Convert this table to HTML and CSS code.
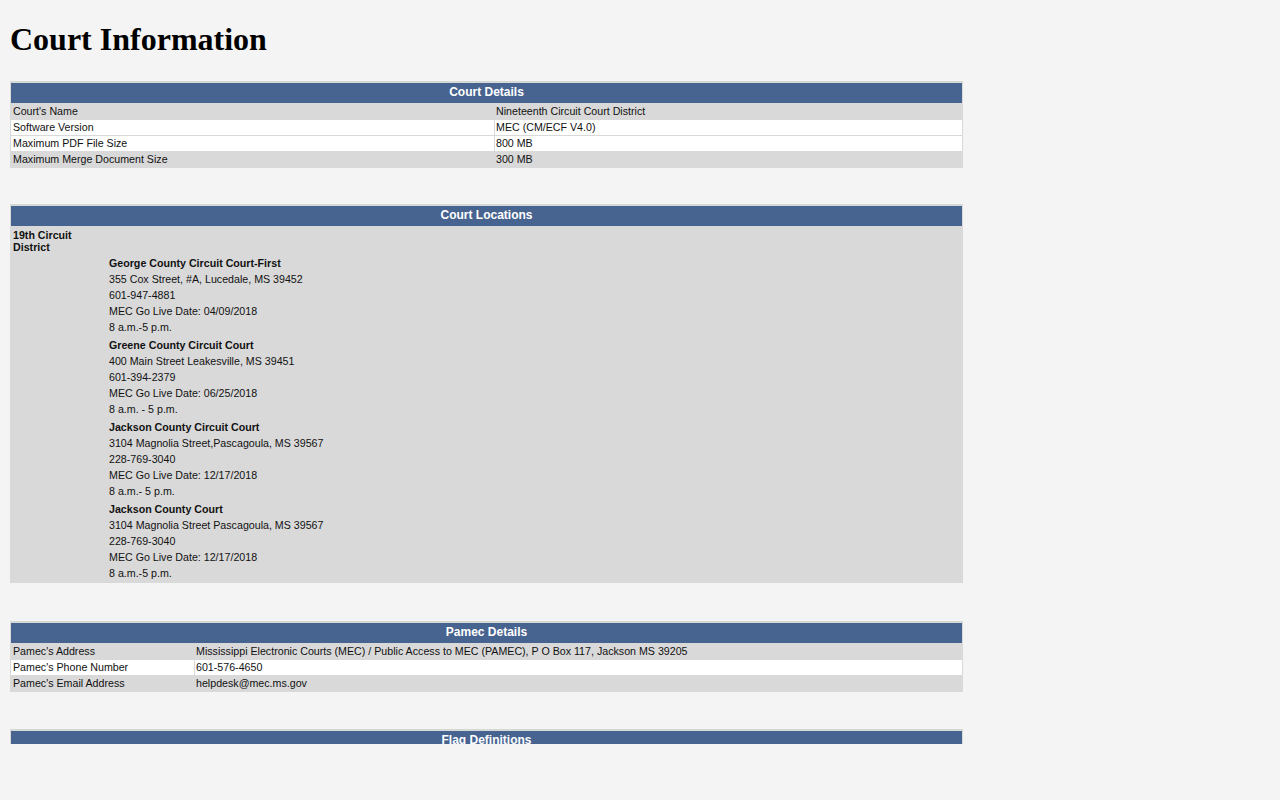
FILE: index.html
```html
<!DOCTYPE html>
<html lang="en">
<head>
<meta charset="utf-8">
<title>Court Information</title>
<link rel="stylesheet" href="styles.css">
</head>
<body>
<div class="page">
  <h1 class="title">Court Information</h1>

  <table class="panel panel-details">
    <tr><th class="panel-head" colspan="2">Court Details</th></tr>
    <tr><td class="label w-details">Court's Name</td><td class="value">Nineteenth Circuit Court District</td></tr>
    <tr class="alt"><td class="label">Software Version</td><td class="value">MEC (CM/ECF V4.0)</td></tr>
    <tr class="alt"><td class="label">Maximum PDF File Size</td><td class="value">800 MB</td></tr>
    <tr><td class="label">Maximum Merge Document Size</td><td class="value">300 MB</td></tr>
  </table>

  <table class="panel panel-locations">
    <tr><th class="panel-head" colspan="2">Court Locations</th></tr>
    <tr><td class="district">19th Circuit District</td><td class="empty"></td></tr>
    <tr>
      <td class="empty"></td>
      <td class="courts">
        <div class="court">
          <div class="court-name">George County Circuit Court-First</div>
          <div>355 Cox Street, #A, Lucedale, MS 39452</div>
          <div>601-947-4881</div>
          <div>MEC Go Live Date: 04/09/2018</div>
          <div>8 a.m.-5 p.m.</div>
        </div>
        <div class="court">
          <div class="court-name">Greene County Circuit Court</div>
          <div>400 Main Street Leakesville, MS 39451</div>
          <div>601-394-2379</div>
          <div>MEC Go Live Date: 06/25/2018</div>
          <div>8 a.m. - 5 p.m.</div>
        </div>
        <div class="court">
          <div class="court-name">Jackson County Circuit Court</div>
          <div>3104 Magnolia Street,Pascagoula, MS 39567</div>
          <div>228-769-3040</div>
          <div>MEC Go Live Date: 12/17/2018</div>
          <div>8 a.m.- 5 p.m.</div>
        </div>
        <div class="court">
          <div class="court-name">Jackson County Court</div>
          <div>3104 Magnolia Street Pascagoula, MS 39567</div>
          <div>228-769-3040</div>
          <div>MEC Go Live Date: 12/17/2018</div>
          <div>8 a.m.-5 p.m.</div>
        </div>
      </td>
    </tr>
  </table>

  <table class="panel">
    <tr><th class="panel-head" colspan="2">Pamec Details</th></tr>
    <tr><td class="label w-pamec">Pamec's Address</td><td class="value">Mississippi Electronic Courts (MEC) / Public Access to MEC (PAMEC), P O Box 117, Jackson MS 39205</td></tr>
    <tr class="alt"><td class="label">Pamec's Phone Number</td><td class="value">601-576-4650</td></tr>
    <tr><td class="label">Pamec's Email Address</td><td class="value">helpdesk@mec.ms.gov</td></tr>
  </table>

  <table class="panel">
    <tr><th class="panel-head" colspan="2">Flag Definitions</th></tr>
  </table>
</div>
</body>
</html>
```

FILE: styles.css
```css
html, body {
  margin: 0;
  padding: 0;
  background: #f4f4f4;
}

.page {
  height: 744px;
  overflow: hidden;
  padding: 0 10px;
  color: #111;
  font-family: "Liberation Sans", Arial, sans-serif;
  font-size: 8pt;
}

.title {
  font-family: "Liberation Serif", "Times New Roman", serif;
  font-weight: bold;
  font-size: 32px;
  color: #000;
  margin: 21px 0 23px 0;
}

.panel {
  width: 953px;
  border-collapse: separate;
  border-spacing: 1px;
  background: #d9d9d9;
  border-top: 1px solid #d2d9d2;
  margin: 0 0 37px 0;
}

.panel-details {
  margin-bottom: 36px;
}

.panel-locations {
  margin-bottom: 38px;
}

.panel-head {
  background: #476390;
  color: #fff;
  font-weight: bold;
  font-size: 12px;
  line-height: 18px;
  height: 18px;
  padding: 0 0 2px 0;
  text-align: center;
}

.panel td {
  padding: 0 2px;
  height: 15px;
  line-height: 15px;
  vertical-align: middle;
  text-align: left;
}

.panel td.value {
  padding-left: 1px;
}

.panel tr.alt td {
  background: #fff;
}

.w-details {
  width: 479px;
}

.w-pamec {
  width: 179px;
}

.panel td.district {
  width: 91px;
  font-weight: bold;
  line-height: 12px;
  padding: 2px 2px 1px 2px;
  vertical-align: top;
  height: auto;
}

.panel td.empty {
  padding: 0;
  height: auto;
}

.panel td.courts {
  padding: 0 2px 1px 2px;
  height: auto;
  line-height: 16px;
  vertical-align: top;
}

.court {
  display: flex;
  flex-direction: column;
  margin-bottom: 2px;
}

.court:last-child {
  margin-bottom: 0;
}

.court > div {
  height: 16px;
  line-height: 16px;
}

.court-name {
  font-weight: bold;
}
```
